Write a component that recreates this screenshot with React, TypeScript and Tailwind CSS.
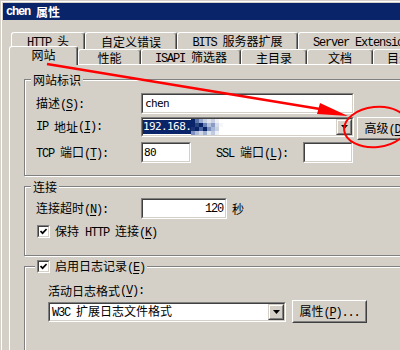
import type { ReactNode } from "react";

const CJK = /[\u2e80-\u9fff\uff00-\uffef]/;
const cjkFont = "font-['Noto_Sans_CJK_SC',sans-serif] text-[12px]";
const monoFont = "font-['Liberation_Mono',monospace] text-[12px] tracking-[-1.2px]";
const valFont = "font-['DejaVu_Sans_Mono',monospace] text-[11px] tracking-[-0.6px]";

// "&" marks the access key letter (underlined)
function T({ s }: { s: string }) {
  const segs: { t: string; cjk: boolean; u: boolean }[] = [];
  for (let i = 0; i < s.length; i++) {
    let ch = s[i];
    let u = false;
    if (ch === "&") {
      i++;
      ch = s[i];
      u = true;
    }
    const cjk = CJK.test(ch);
    const last = segs[segs.length - 1];
    if (last && last.cjk === cjk && !u && !last.u) last.t += ch;
    else segs.push({ t: ch, cjk, u });
  }
  return (
    <>
      {segs.map((g, i) => (
        <span
          key={i}
          className={`whitespace-pre ${g.cjk ? cjkFont : monoFont}${
            g.u ? " underline underline-offset-[2px]" : ""
          }`}
        >
          {g.t}
        </span>
      ))}
    </>
  );
}

function Sunken({ className, children }: { className: string; children?: ReactNode }) {
  return (
    <div
      className={`shrink-0 border border-t-[#808080] border-l-[#808080] border-r-white border-b-white ${className}`}
    >
      <div className="flex h-full items-center border border-t-[#404040] border-l-[#404040] border-r-[#d4d0c8] border-b-[#d4d0c8] bg-white">
        {children}
      </div>
    </div>
  );
}

function Raised({ className, children }: { className: string; children?: ReactNode }) {
  return (
    <div
      className={`shrink-0 border border-t-white border-l-white border-r-[#404040] border-b-[#404040] bg-[#d4d0c8] ${className}`}
    >
      <div className="flex h-full items-center justify-center border border-t-[#d4d0c8] border-l-[#d4d0c8] border-r-[#808080] border-b-[#808080]">
        {children}
      </div>
    </div>
  );
}

function DropBtn() {
  return (
    <div className="h-full w-[16px] shrink-0 border border-t-[#d4d0c8] border-l-[#d4d0c8] border-r-[#404040] border-b-[#404040] bg-[#d4d0c8]">
      <div className="flex h-full items-center justify-center border border-t-white border-l-white border-r-[#808080] border-b-[#808080]">
        <svg width="7" height="4" viewBox="0 0 7 4">
          <polygon points="0,0 7,0 3.5,4" fill="#000" />
        </svg>
      </div>
    </div>
  );
}

function Check() {
  return (
    <div className="h-[13px] w-[13px] shrink-0 border border-t-[#808080] border-l-[#808080] border-r-white border-b-white">
      <div className="flex h-full items-center justify-center border border-t-[#404040] border-l-[#404040] border-r-[#d4d0c8] border-b-[#d4d0c8] bg-white">
        <svg width="7" height="7" viewBox="0 0 7 7">
          <path d="M0.5 3 L2.6 5.2 L6.6 1" stroke="#000" strokeWidth="1.7" fill="none" />
        </svg>
      </div>
    </div>
  );
}

function Tab({ className, s }: { className: string; s: string }) {
  return (
    <div
      className={`flex shrink-0 items-center justify-center rounded-t-[3px] border-t border-l border-r border-t-white border-l-white border-r-[#404040] bg-[#d4d0c8] shadow-[inset_-1px_0_0_#808080] ${className}`}
    >
      <span className="whitespace-nowrap">
        <T s={s} />
      </span>
    </div>
  );
}

function Group({
  className,
  label,
  children,
}: {
  className: string;
  label: ReactNode;
  children?: ReactNode;
}) {
  return (
    <div
      className={`relative ml-[14px] w-[420px] border border-[#808080] shadow-[inset_1px_1px_0_#fff,1px_1px_0_#fff] ${className}`}
    >
      {label}
      {children}
    </div>
  );
}

const mosaic = [
  ["bg-[#0a246a]", "bg-[#5a73a8]", "bg-[#9aaad0]", "bg-[#c8d0e4]", "bg-[#dfe4ee]", "bg-[#c8d0e4]", "bg-[#eef0f6]", "bg-white"],
  ["bg-[#0a246a]", "bg-[#2a4480]", "bg-[#0a246a]", "bg-[#6c82b4]", "bg-[#b4c0dc]", "bg-[#8a9cc6]", "bg-[#d6dcea]", "bg-[#f4f6fa]"],
  ["bg-[#1a3476]", "bg-[#0a246a]", "bg-[#4a64a0]", "bg-[#0a246a]", "bg-[#7a8ebe]", "bg-[#a8b6d6]", "bg-[#c8d0e4]", "bg-white"],
  ["bg-[#8090c0]", "bg-[#b0bcd8]", "bg-[#d0d8e8]", "bg-[#a0b0d0]", "bg-[#e0e6f0]", "bg-[#c0cae0]", "bg-[#eef0f6]", "bg-white"],
];

export default function App() {
  return (
    <div className="relative h-[350px] w-[400px] overflow-hidden bg-[#d4d0c8] leading-[14px] text-black">
      <div className="h-full border-t border-l border-[#d4d0c8]">
        <div className="h-full border-t border-l border-white pt-px pl-px">
          {/* title bar */}
          <div className="flex h-[17px] items-center bg-[#0a246a] pl-[3px] font-bold text-white">
            <T s="chen 属性" />
          </div>

          <div className="ml-[6px] mt-[12px]">
            {/* back row of tabs */}
            <div className="flex h-[17px] pl-[2px]">
              <Tab className="h-[17px] w-[74px]" s="HTTP 头" />
              <Tab className="h-[17px] w-[92px]" s="自定义错误" />
              <Tab className="h-[17px] w-[121px]" s="BITS 服务器扩展" />
              <Tab className="h-[17px] w-[132px]" s="Server Extensions" />
            </div>
            {/* front row of tabs */}
            <div className="relative z-10 flex h-[15px] items-end">
              <Tab className="mb-[-1px] h-[19px] w-[69px] pb-[3px]" s="网站" />
              <Tab className="h-[15px] w-[63px]" s="性能" />
              <Tab className="h-[15px] w-[100px]" s="ISAPI 筛选器" />
              <Tab className="h-[15px] w-[66px]" s="主目录" />
              <Tab className="h-[15px] w-[66px]" s="文档" />
              <Tab className="h-[15px] w-[88px]" s="目录安全性" />
            </div>

            {/* tab page */}
            <div className="h-[300px] border-t border-l border-white pt-[14px]">
              <Group
                className="h-[97px]"
                label={
                  <span className="absolute left-[6px] top-[-8px] bg-[#d4d0c8] px-[2px]">
                    <T s="网站标识" />
                  </span>
                }
              >
                <div className="ml-[11px] mt-[13px] flex h-[21px] items-center">
                  <div className="w-[105px]">
                    <T s="描述(&S):" />
                  </div>
                  <Sunken className="h-[21px] w-[213px]">
                    <span className={`pl-[2px] ${valFont}`}>chen</span>
                  </Sunken>
                </div>

                <div className="ml-[11px] mt-[3px] flex h-[20px] items-start">
                  <div className="flex h-[20px] w-[105px] items-center">
                    <T s="IP 地址(&I):" />
                  </div>
                  <Sunken className="h-[20px] w-[213px]">
                    <span className={`flex h-[14px] items-center bg-[#0a246a] text-white ${valFont}`}>
                      192.168.
                    </span>
                    <div className="grid w-[32px] grid-cols-8">
                      {mosaic.flat().map((c, i) => (
                        <div key={i} className={`h-[4px] w-[4px] ${c}`} />
                      ))}
                    </div>
                    <div className="flex-1" />
                    <DropBtn />
                  </Sunken>
                  <Raised className="ml-[3px] h-[23px] w-[75px]">
                    <span className="whitespace-nowrap">
                      <T s="高级(&D)..." />
                    </span>
                  </Raised>
                </div>

                <div className="ml-[11px] mt-[5px] flex h-[21px] items-center">
                  <div className="w-[105px]">
                    <T s="TCP 端口(&T):" />
                  </div>
                  <Sunken className="h-[21px] w-[50px]">
                    <span className={`pl-px ${valFont}`}>80</span>
                  </Sunken>
                  <div className="ml-[25px] w-[87px]">
                    <T s="SSL 端口(&L):" />
                  </div>
                  <Sunken className="h-[21px] w-[50px]" />
                </div>
              </Group>

              <Group
                className="mt-[10px] h-[70px]"
                label={
                  <span className="absolute left-[6px] top-[-8px] bg-[#d4d0c8] px-[2px]">
                    <T s="连接" />
                  </span>
                }
              >
                <div className="ml-[11px] mt-[11px] flex h-[21px] items-center">
                  <div className="w-[105px]">
                    <T s="连接超时(&N):" />
                  </div>
                  <Sunken className="h-[21px] w-[86px]">
                    <span className={`ml-auto pr-[2px] ${monoFont}`}>120</span>
                  </Sunken>
                  <span className="ml-[5px]">
                    <T s="秒" />
                  </span>
                </div>
                <div className="ml-[12px] mt-[6px] flex h-[13px] items-center gap-[5px]">
                  <Check />
                  <span className="whitespace-nowrap">
                    <T s="保持 HTTP 连接(&K)" />
                  </span>
                </div>
              </Group>

              <Group
                className="mt-[10px] h-[120px]"
                label={
                  <div className="absolute left-[10px] top-[-7px] flex h-[13px] items-center gap-[5px] bg-[#d4d0c8] px-[2px]">
                    <Check />
                    <span className="whitespace-nowrap">
                      <T s="启用日志记录(&E)" />
                    </span>
                  </div>
                }
              >
                <div className="ml-[23px] mt-[17px] flex h-[14px] items-center">
                  <T s="活动日志格式(&V):" />
                </div>
                <div className="ml-[23px] mt-[2px] flex items-center">
                  <Sunken className="h-[20px] w-[238px]">
                    <span className="whitespace-nowrap pl-[2px]">
                      <T s="W3C 扩展日志文件格式" />
                    </span>
                    <div className="flex-1" />
                    <DropBtn />
                  </Sunken>
                  <Raised className="ml-[6px] h-[23px] w-[75px]">
                    <span className="whitespace-nowrap">
                      <T s="属性(&P)..." />
                    </span>
                  </Raised>
                </div>
              </Group>
            </div>
          </div>
        </div>
      </div>

      {/* red annotation drawn over the dialog */}
      <svg className="pointer-events-none absolute left-0 top-0 z-20" width="400" height="350">
        <line x1="47" y1="64" x2="326" y2="110" stroke="#ff0000" strokeWidth="2.5" />
        <polygon points="348,116 320,103 317,114" fill="#ff0000" />
        <ellipse
          cx="376"
          cy="127"
          rx="32"
          ry="20"
          transform="rotate(-6 376 127)"
          fill="none"
          stroke="#ff0000"
          strokeWidth="2"
        />
      </svg>
    </div>
  );
}
